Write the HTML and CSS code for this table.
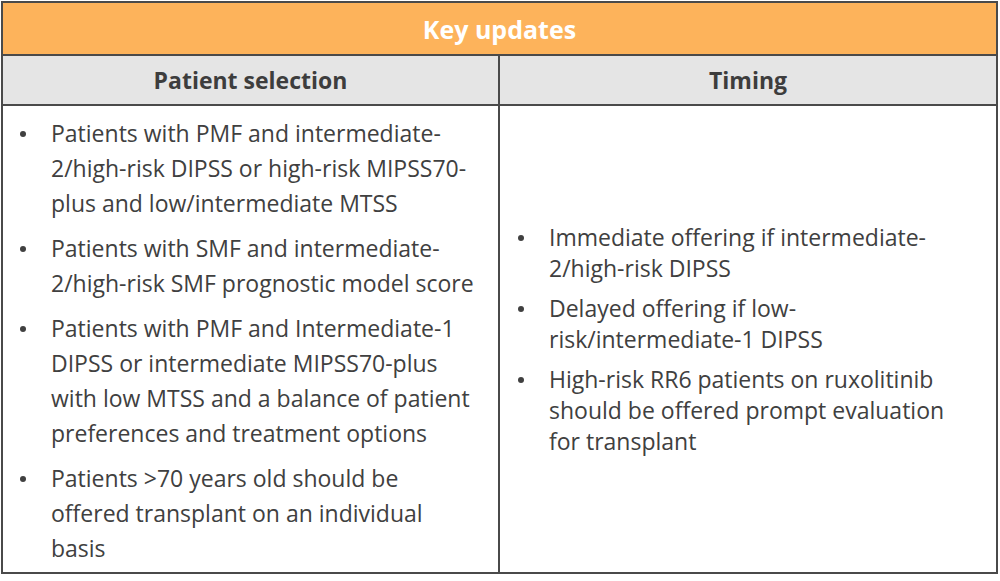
FILE: index.html
```html
<!DOCTYPE html>
<html lang="en">
<head>
<meta charset="utf-8">
<title>Key updates</title>
<link rel="stylesheet" href="styles.css">
</head>
<body>
<div class="table">
  <div class="title">Key updates</div>
  <div class="row head">
    <div class="cell first">Patient selection</div>
    <div class="cell">Timing</div>
  </div>
  <div class="row body">
    <div class="cell first">
      <ul class="list left">
        <li>Patients with PMF and intermediate-<br>2/high-risk DIPSS or high-risk MIPSS70-<br>plus and low/intermediate MTSS</li>
        <li>Patients with SMF and intermediate-<br>2/high-risk SMF prognostic model score</li>
        <li>Patients with PMF and Intermediate-1<br>DIPSS or intermediate MIPSS70-plus<br>with low MTSS and a balance of patient<br>preferences and treatment options</li>
        <li>Patients &gt;70 years old should be<br>offered transplant on an individual<br>basis</li>
      </ul>
    </div>
    <div class="cell mid">
      <ul class="list right">
        <li>Immediate offering if intermediate-<br>2/high-risk DIPSS</li>
        <li>Delayed offering if low-<br>risk/intermediate-1 DIPSS</li>
        <li>High-risk RR6 patients on ruxolitinib<br>should be offered prompt evaluation<br>for transplant</li>
      </ul>
    </div>
  </div>
</div>
</body>
</html>
```

FILE: styles.css
```css
html, body {
  margin: 0;
  padding: 0;
  background: #ffffff;
}

body {
  font-family: "Open Sans", "Noto Sans", sans-serif;
  color: #404040;
}

.table {
  box-sizing: border-box;
  width: 997px;
  margin: 1px 0 0 1px;
  border: 2px solid #4a4a4a;
}

.title {
  height: 51px;
  background: #fdb35b;
  border-bottom: 2px solid #4a4a4a;
  color: #ffffff;
  font-weight: 700;
  font-size: 25px;
  display: flex;
  align-items: center;
  justify-content: center;
}

.row {
  display: grid;
  grid-template-columns: 497px 496px;
}

.head {
  height: 48px;
  background: #e5e5e5;
  border-bottom: 2px solid #4a4a4a;
}

.head .cell {
  display: flex;
  align-items: center;
  justify-content: center;
  font-weight: 700;
  font-size: 23px;
  color: #3d3d3d;
}

.cell.first {
  border-right: 2px solid #4a4a4a;
}

.body .cell.first {
  padding: 10px 0 6px 16px;
}

.body .cell.mid {
  display: flex;
  align-items: center;
  padding-left: 17px;
}

.list {
  list-style: none;
  margin: 0;
  padding: 0;
  font-size: 23px;
  white-space: nowrap;
  display: flex;
  flex-direction: column;
}

.list li {
  display: grid;
  grid-template-columns: 32px 1fr;
  align-items: start;
}

.list li::before {
  content: "";
  width: 6px;
  height: 6px;
  margin-left: 1px;
  border-radius: 50%;
  background: #404040;
}

.list.left {
  line-height: 35px;
  gap: 10px;
}

.list.left li::before {
  margin-top: 15px;
}

.list.right {
  line-height: 31px;
  gap: 9px;
}

.list.right li::before {
  margin-top: 13px;
}
```
